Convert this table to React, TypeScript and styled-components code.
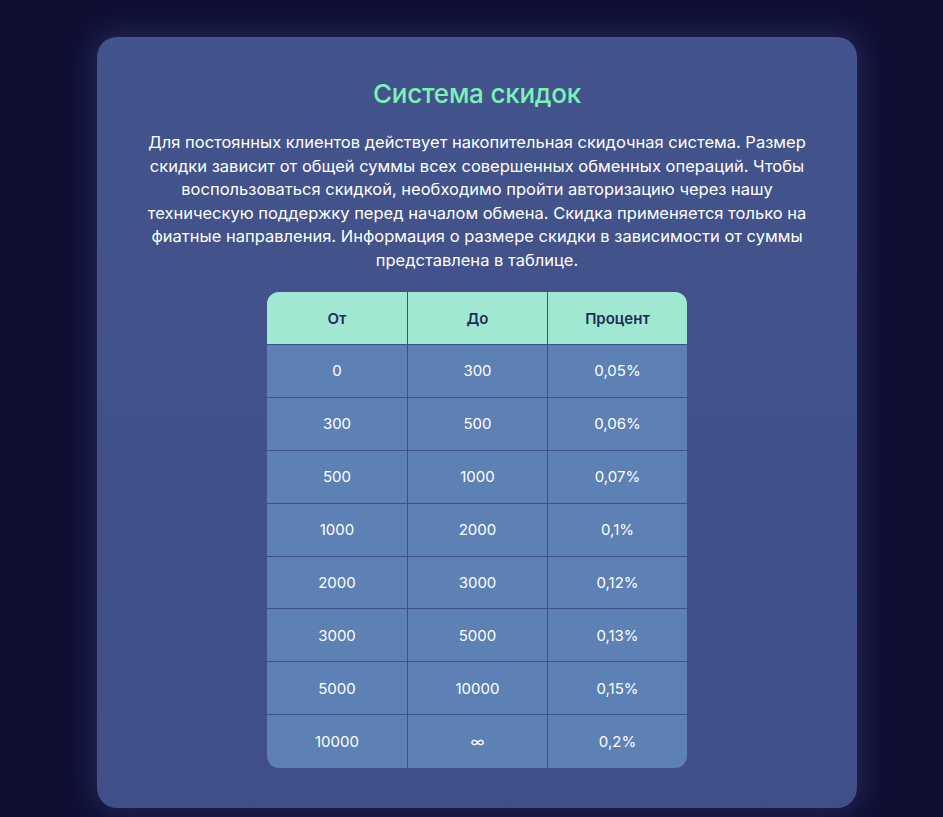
import React from "react";
import styled, { createGlobalStyle } from "styled-components";

const Global = createGlobalStyle`
  html, body { margin: 0; padding: 0; }
  body {
    background: #0f0f33;
    font-family: Inter, "Noto Sans", sans-serif;
    min-height: 817px;
  }
`;

const Page = styled.div`
  display: flex;
  padding: 37px 0 0 97px;
`;

const Card = styled.section`
  width: 760px;
  box-sizing: border-box;
  padding: 40px 40px 40px;
  border-radius: 20px;
  background: linear-gradient(180deg, #43538b 0%, #404f88 100%);
  box-shadow: 0 0 28px 4px rgba(70, 80, 150, 0.4);
  display: flex;
  flex-direction: column;
  align-items: center;
`;

const Title = styled.h2`
  margin: 0;
  color: #7df0b8;
  font-size: 26px;
  font-weight: 500;
  line-height: 34px;
  letter-spacing: -0.2px;
`;

const Text = styled.p`
  margin: 20px 0 20px;
  color: #ffffff;
  font-size: 16.5px;
  line-height: 23.5px;
  text-align: center;
  letter-spacing: 0;
`;

const Table = styled.table`
  width: 420px;
  table-layout: fixed;
  border-collapse: separate;
  border-spacing: 0;
  border-radius: 12px;
  overflow: hidden;
  background: #5d80b5;
`;

const HeadCell = styled.th<{ $first?: boolean }>`
  height: 53px;
  box-sizing: border-box;
  padding: 0;
  background: #a1e8d2;
  color: #1e2b57;
  font-size: 15px;
  font-weight: 600;
  text-align: center;
  border-bottom: 1px solid #3f5089;
  border-left: ${(p) => (p.$first ? "none" : "1px solid #3f5089")};
`;

const Cell = styled.td<{ $first?: boolean; $last?: boolean }>`
  height: 52.9px;
  box-sizing: border-box;
  padding: 0;
  color: #ffffff;
  font-size: 15px;
  font-weight: 400;
  text-align: center;
  border-bottom: ${(p) => (p.$last ? "none" : "1px solid #3f5089")};
  border-left: ${(p) => (p.$first ? "none" : "1px solid #3f5089")};
`;

const rows: [string, string, string][] = [
  ["0", "300", "0,05%"],
  ["300", "500", "0,06%"],
  ["500", "1000", "0,07%"],
  ["1000", "2000", "0,1%"],
  ["2000", "3000", "0,12%"],
  ["3000", "5000", "0,13%"],
  ["5000", "10000", "0,15%"],
  ["10000", "∞", "0,2%"],
];

export default function App() {
  return (
    <>
      <Global />
      <Page>
        <Card>
          <Title>Система скидок</Title>
          <Text>
            Для постоянных клиентов действует накопительная скидочная система. Размер скидки зависит от общей суммы всех
            совершенных обменных операций. Чтобы воспользоваться скидкой, необходимо пройти авторизацию через нашу
            техническую поддержку перед началом обмена. Скидка применяется только на фиатные направления. Информация о
            размере скидки в зависимости от суммы представлена в таблице.
          </Text>
          <Table>
            <thead>
              <tr>
                <HeadCell $first>От</HeadCell>
                <HeadCell>До</HeadCell>
                <HeadCell>Процент</HeadCell>
              </tr>
            </thead>
            <tbody>
              {rows.map((r, i) => (
                <tr key={i}>
                  {r.map((c, j) => (
                    <Cell key={j} $first={j === 0} $last={i === rows.length - 1}>
                      {c}
                    </Cell>
                  ))}
                </tr>
              ))}
            </tbody>
          </Table>
        </Card>
      </Page>
    </>
  );
}
